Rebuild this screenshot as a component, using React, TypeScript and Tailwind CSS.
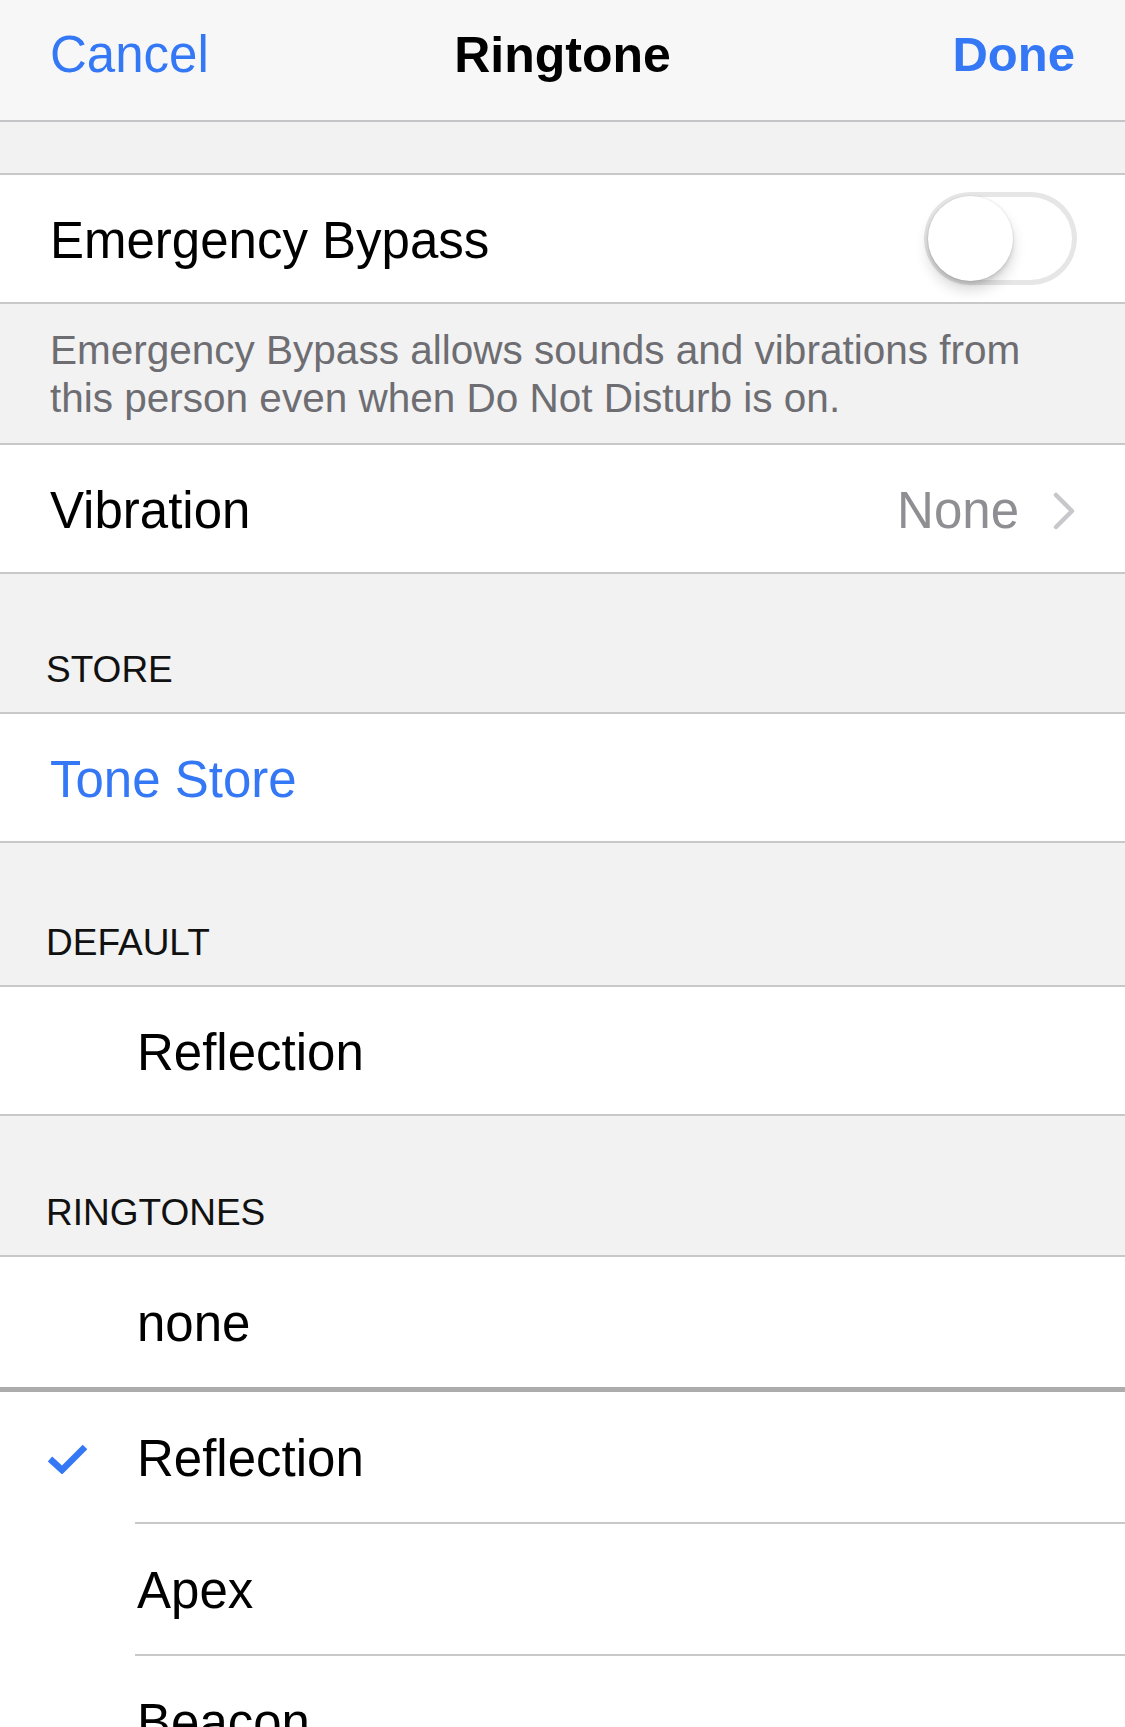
import { Fragment } from 'react';

const font = "font-['Liberation_Sans',Arial,sans-serif]";

function Chevron() {
  return (
    <svg width="22" height="38" viewBox="0 0 22 38" fill="none">
      <polyline points="3,3 19,19 3,35" stroke="#c7c7cc" strokeWidth="4.5" strokeLinecap="round" strokeLinejoin="round" />
    </svg>
  );
}

function Check() {
  return (
    <svg width="42" height="34" viewBox="0 0 42 34" fill="none">
      <polyline points="4,19 16,30 39,7" stroke="#3478f6" strokeWidth="6.5" strokeLinecap="butt" strokeLinejoin="miter" />
    </svg>
  );
}

function Toggle() {
  return (
    <div className="relative h-[93px] w-[153px] rounded-full bg-white shadow-[inset_0_0_0_5px_#e6e6e6]">
      <div className="absolute left-[4px] top-[4px] h-[85px] w-[85px] rounded-full bg-white shadow-[0_9px_14px_rgba(0,0,0,0.16),0_3px_4px_rgba(0,0,0,0.10),0_0_0_1px_rgba(0,0,0,0.04)]" />
    </div>
  );
}

function Header({ label, h }: { label: string; h: string }) {
  return (
    <div className={`flex flex-col justify-end px-[46px] pb-[19px] ${h}`}>
      <span className="text-[37px] uppercase leading-[46px] text-[#111]">{label}</span>
    </div>
  );
}

const tones = ['Reflection', 'Apex', 'Beacon'];

export default function App() {
  return (
    <div className={`min-h-screen w-full bg-[#f2f2f2] text-black ${font}`}>
      {/* Nav bar */}
      <header className="grid h-[122px] grid-cols-3 items-center border-b-2 border-[#c4c4c6] bg-[#f7f7f7] px-[50px] pb-[10px]">
        <span className="justify-self-start text-[51px] text-[#3478f6]">Cancel</span>
        <span className="justify-self-center text-[50px] font-bold">Ringtone</span>
        <span className="justify-self-end text-[49px] font-bold text-[#3478f6]">Done</span>
      </header>

      <div className="h-[51px]" />

      {/* Emergency Bypass */}
      <div className="border-y-2 border-[#c8c8c8] bg-white">
        <div className="flex h-[127px] items-center justify-between pl-[50px] pr-[48px]">
          <span className="pt-[5px] text-[51px]">Emergency Bypass</span>
          <Toggle />
        </div>
      </div>

      <div className="px-[50px] pb-[21px] pt-[22px] text-[40.5px] leading-[48px] text-[#6d6d72]">
        Emergency Bypass allows sounds and vibrations from
        <br />
        this person even when Do Not Disturb is on.
      </div>

      {/* Vibration */}
      <div className="border-y-2 border-[#c8c8c8] bg-white">
        <div className="flex h-[127px] items-center justify-between pl-[50px] pr-[50px] pt-[5px]">
          <span className="text-[51px]">Vibration</span>
          <div className="flex items-center gap-[34px]">
            <span className="text-[51px] text-[#8e8e93]">None</span>
            <Chevron />
          </div>
        </div>
      </div>

      <Header label="Store" h="h-[138px]" />

      <div className="border-y-2 border-[#c8c8c8] bg-white">
        <div className="flex h-[127px] items-center px-[50px] pt-[5px]">
          <span className="text-[51px] text-[#3478f6]">Tone Store</span>
        </div>
      </div>

      <Header label="Default" h="h-[142px]" />

      <div className="border-y-2 border-[#c8c8c8] bg-white">
        <div className="flex h-[127px] items-center pl-[137px] pt-[5px]">
          <span className="text-[51px]">Reflection</span>
        </div>
      </div>

      <Header label="Ringtones" h="h-[139px]" />

      <div className="bg-white">
        <div className="h-[2px] bg-[#c8c8c8]" />
        <div className="flex h-[130px] items-center pl-[137px] pt-[5px]">
          <span className="text-[51px]">none</span>
        </div>
        <div className="h-[5px] bg-[#acacac]" />
        {tones.map((t, i) => (
          <Fragment key={t}>
            <div className="flex h-[130px] items-center">
              <div className="flex w-[137px] items-center pl-[46px]">{i === 0 && <Check />}</div>
              <span className="pt-[5px] text-[51px]">{t}</span>
            </div>
            <div className="ml-[135px] h-[2px] bg-[#c8c8c8]" />
          </Fragment>
        ))}
      </div>
    </div>
  );
}
